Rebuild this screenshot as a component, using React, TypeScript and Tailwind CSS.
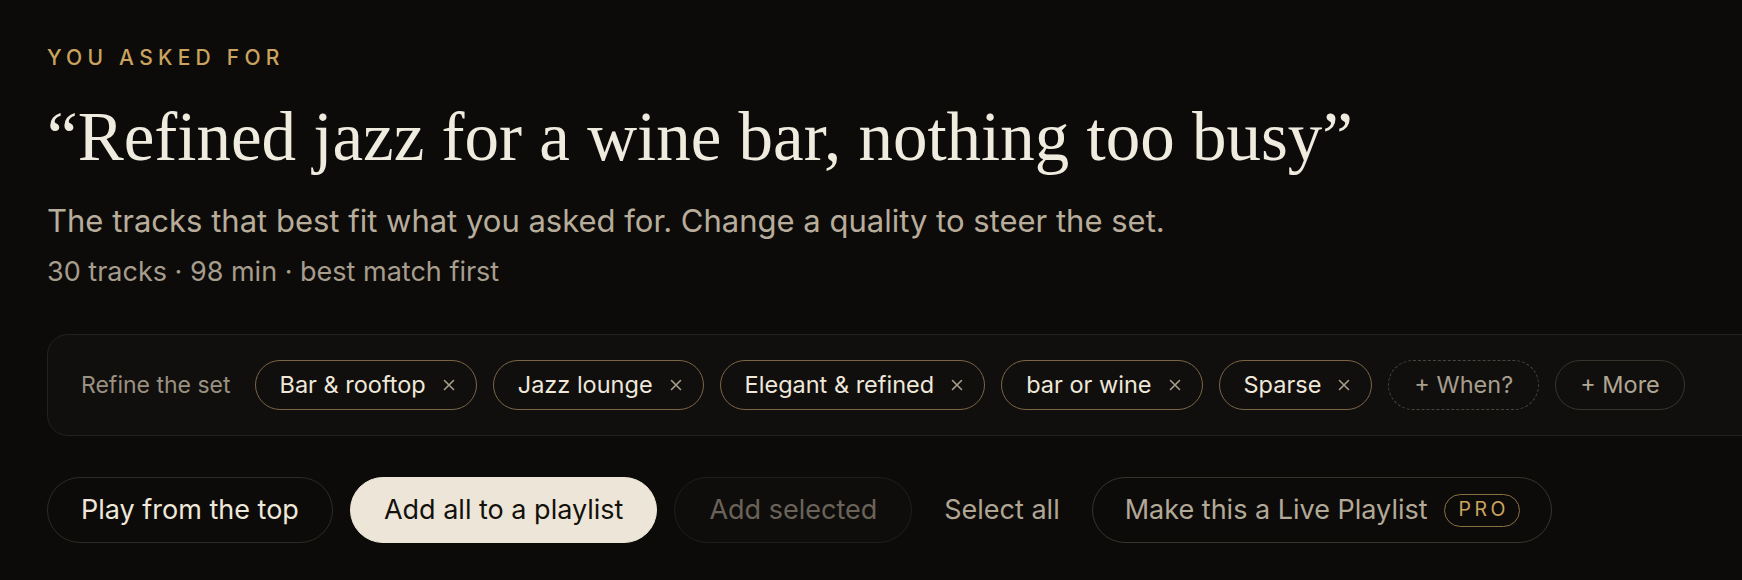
import React from "react";

const XIcon = () => (
  <svg width="12" height="12" viewBox="0 0 12 12" className="shrink-0">
    <path d="M1.5 1.5 L10.5 10.5 M10.5 1.5 L1.5 10.5" stroke="#a89e8c" strokeWidth="1.6" strokeLinecap="round" />
  </svg>
);

const Chip = ({ label }: { label: string }) => (
  <div className="flex h-[50px] shrink-0 items-center gap-[17px] rounded-full border-[1.5px] border-[#7a6646] pl-[24px] pr-[21px] text-[23.5px] text-[#efe8da]">
    <span className="leading-none">{label}</span>
    <XIcon />
  </div>
);

export default function App() {
  const chips = ["Bar & rooftop", "Jazz lounge", "Elegant & refined", "bar or wine", "Sparse"];
  return (
    <div className="min-h-screen w-full overflow-hidden bg-[#0d0b09] pl-[47px] pt-[44px] font-['Inter',sans-serif]">
      <div className="text-[21px] leading-[28px] font-medium tracking-[0.25em] text-[#c9a35f]">YOU ASKED FOR</div>
      <h1 className="mt-[27px] whitespace-nowrap font-['Liberation_Serif',serif] text-[69px] leading-[76px] font-normal text-[#f0ebdf]">
        “Refined jazz for a wine bar, nothing too busy”
      </h1>
      <p className="mt-[26px] whitespace-nowrap text-[31px] leading-[40px] text-[#b8ad9b]">
        The tracks that best fit what you asked for. Change a quality to steer the set.
      </p>
      <p className="mt-[13px] whitespace-nowrap text-[27px] leading-[35px] text-[#a69d8d]">
        30 tracks · 98 min · best match first
      </p>

      <div className="mt-[45px] flex h-[102px] w-[1760px] items-center gap-[16px] rounded-[21px] border-[1.5px] border-[#25211c] bg-[#110f0d] pl-[33px]">
        <span className="mr-[8px] text-[23px] text-[#9b9181]">Refine the set</span>
        {chips.map((c) => (
          <Chip key={c} label={c} />
        ))}
        <div className="flex h-[50px] shrink-0 items-center rounded-full border-[1.5px] border-dashed border-[#4a443c] px-[25px] text-[23.5px] text-[#a89e8e]">
          + When?
        </div>
        <div className="flex h-[50px] shrink-0 items-center rounded-full border-[1.5px] border-[#38332d] px-[24px] text-[23.5px] text-[#b0a694]">
          + More
        </div>
      </div>

      <div className="mt-[41px] flex items-center gap-[17px]">
        <button className="flex h-[66px] items-center rounded-full border-[1.5px] border-[#2e2a25] px-[33px] text-[27px] text-[#efe8da]">
          Play from the top
        </button>
        <button className="flex h-[66px] items-center rounded-full border-[1.5px] border-[#ede6d8] bg-[#ede6d8] px-[33px] text-[27px] text-[#14110d]">
          Add all to a playlist
        </button>
        <button className="flex h-[66px] items-center rounded-full border-[1.5px] border-[#211e1a] bg-[#0f0d0b] px-[34px] text-[27px] text-[#6a6359]">
          Add selected
        </button>
        <button className="flex h-[66px] items-center px-[15px] text-[27px] text-[#b0a694]">Select all</button>
        <button className="flex h-[66px] items-center gap-[16px] rounded-full border-[1.5px] border-[#38332c] pl-[32px] pr-[31px] text-[27px] text-[#b3a997]">
          <span>Make this a Live Playlist</span>
          <span className="flex h-[33px] items-center rounded-full border-[1.5px] border-[#8a7142] pl-[14px] pr-[10px] text-[19.5px] tracking-[0.18em] text-[#c9a35f]">
            PRO
          </span>
        </button>
      </div>
    </div>
  );
}
